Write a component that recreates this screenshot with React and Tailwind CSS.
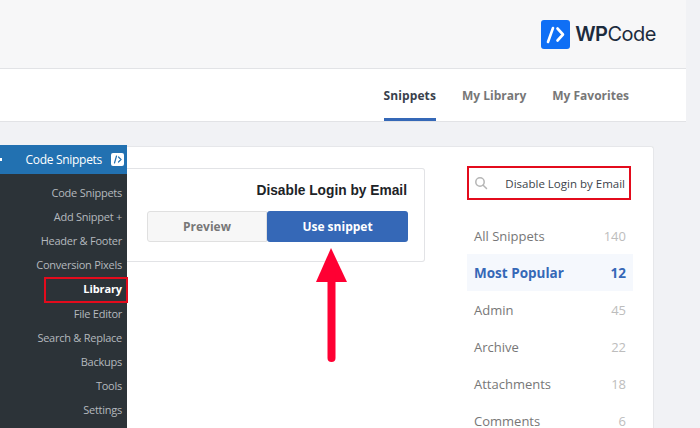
import React from 'react';

const menu = ['Code Snippets', 'Add Snippet +', 'Header & Footer', 'Conversion Pixels', 'Library', 'File Editor', 'Search & Replace', 'Backups', 'Tools', 'Settings'];
const categories = [
  ['All Snippets', 140],
  ['Most Popular', 12],
  ['Admin', 45],
  ['Archive', 22],
  ['Attachments', 18],
  ['Comments', 6],
];

function Logo() {
  return (
    <div className="flex items-center gap-[5px]">
      <div className="w-[29px] h-[29px] rounded-[3px] bg-[#0f6ff5] flex items-center justify-center">
        <svg width="29" height="29" viewBox="0 0 29 29" fill="none" stroke="#fff" strokeWidth="2.6" strokeLinecap="round" strokeLinejoin="round">
          <path d="M7 22 L12 8" />
          <path d="M16.5 8.5 L22 14.5 L16.5 20.5" />
        </svg>
      </div>
      <div className="text-[20px] leading-none text-[#1c2b3d] tracking-[-0.5px] font-['Inter',sans-serif]">
        <span className="font-semibold">WP</span>
        <span>Code</span>
      </div>
    </div>
  );
}

function App() {
  return (
    <div className="relative w-[700px] h-[428px] overflow-hidden bg-[#f1f2f5] font-['Open_Sans','Noto_Sans',sans-serif]">
      <div className="w-[686px] h-[122px] border-b border-[#e2e3e6]">
        <div className="h-[69px] bg-[#f7f7f8] border-b border-[#e2e3e6] flex items-center justify-end pr-[30px]">
          <Logo />
        </div>
        <div className="h-[52px] bg-white flex justify-end gap-[26px] pr-[57px] text-[12px] font-bold text-[#777]">
          <div className="h-full flex items-center border-b-[3px] border-[#3568b7] text-[#393f4c] tracking-[0.1px] pt-[5px]">Snippets</div>
          <div className="flex items-center pt-[2px]">My Library</div>
          <div className="flex items-center pt-[2px]">My Favorites</div>
        </div>
      </div>

      <div className="flex mt-[23px] h-[283px]">
        <aside className="w-[127px] shrink-0 bg-[#2c3338] z-10">
          <div className="h-[29px] bg-[#2271b1] flex items-center justify-between pr-[3px] text-[12px] tracking-[-0.3px] text-white">
            <span className="w-[2px] h-[3px] bg-white" />
            <div className="flex items-center gap-[9px]">
              <span>Code Snippets</span>
              <span className="w-[13px] h-[13px] rounded-[2px] bg-white flex items-center justify-center">
                <svg width="11" height="11" viewBox="0 0 11 11" fill="none" stroke="#2271b1" strokeWidth="1.2" strokeLinecap="round">
                  <path d="M2.5 9 L4.5 2" />
                  <path d="M6.5 3 L9 5.5 L6.5 8" />
                </svg>
              </span>
            </div>
          </div>
          <ul className="pt-[7px]">
            {menu.map((item) => (
              <li
                key={item}
                className={
                  item === 'Library'
                    ? 'h-[24.15px] flex items-center justify-end pr-[5px] text-[11px] tracking-[-0.1px] font-bold text-white'
                    : 'h-[24.15px] flex items-center justify-end pr-[5px] text-[11px] tracking-[-0.25px] text-[#b4b9be]'
                }
              >
                {item}
              </li>
            ))}
          </ul>
        </aside>

        <main className="relative mt-px w-[527px] bg-white rounded-tr-[3px] border-r border-t border-[#e6e7ea] flex">
          <section className="w-[340px] shrink-0 pt-[21px]">
            <div className="w-[298px] h-[94px] border border-l-0 border-[#e2e3e6] rounded-r-[3px] pr-[16px] pt-[13px]">
              <h2 className="pr-px text-[13.75px] leading-[18px] font-bold text-[#1d2327] text-right font-['Liberation_Sans',sans-serif]">Disable Login by Email</h2>
              <div className="flex justify-end mt-[11px] h-[31px] text-[12px] font-bold">
                <button className="w-[120px] bg-[#f7f7f7] border border-[#e0e0e0] rounded-l-[3px] text-[#777] pt-px">Preview</button>
                <button className="w-[141px] bg-[#3568b7] rounded-[3px] text-white pt-px">Use snippet</button>
              </div>
            </div>
          </section>

          <section className="w-[166px] pt-[19px]">
            <div className="w-[164px] h-[34px] border-2 border-[#e30b1c] flex items-center justify-between pl-[5px] pr-[4px] text-[11.5px] text-[#3c434a]">
              <svg width="14" height="14" viewBox="0 0 14 14" fill="none" stroke="#b5b5b5" strokeWidth="1.5" strokeLinecap="round">
                <circle cx="6" cy="6" r="4.2" />
                <path d="M9.2 9.2 L12.5 12.5" />
              </svg>
              <span className="pt-px">Disable Login by Email</span>
            </div>
            <ul className="mt-[17px]">
              {categories.map(([name, count]) => (
                <li
                  key={name}
                  className={
                    name === 'Most Popular'
                      ? 'h-[37px] px-[7px] pt-[2px] flex items-center justify-between bg-[#f5f8fd] text-[13.5px] font-bold text-[#3568b7]'
                      : 'h-[37px] px-[7px] pt-[2px] flex items-center justify-between text-[13px] text-[#777]'
                  }
                >
                  <span>{name}</span>
                  <span className={name === 'Most Popular' ? '' : 'text-[#bdbdbd]'}>{count}</span>
                </li>
              ))}
            </ul>
          </section>
        </main>
      </div>

      {/* annotations on top of the screenshot */}
      <div className="absolute left-[44px] top-[277px] w-[84px] h-[26px] border-2 border-[#e30b1c] z-20" />
      <svg className="absolute left-[310px] top-[245px] z-20" width="44" height="122" viewBox="0 0 44 122">
        <path d="M21 3 L37 37 L6 37 Z" fill="#ff0033" />
        <path d="M21.5 30 L21.5 113" stroke="#ff0033" strokeWidth="8" strokeLinecap="round" fill="none" />
      </svg>
    </div>
  );
}

export default App;
